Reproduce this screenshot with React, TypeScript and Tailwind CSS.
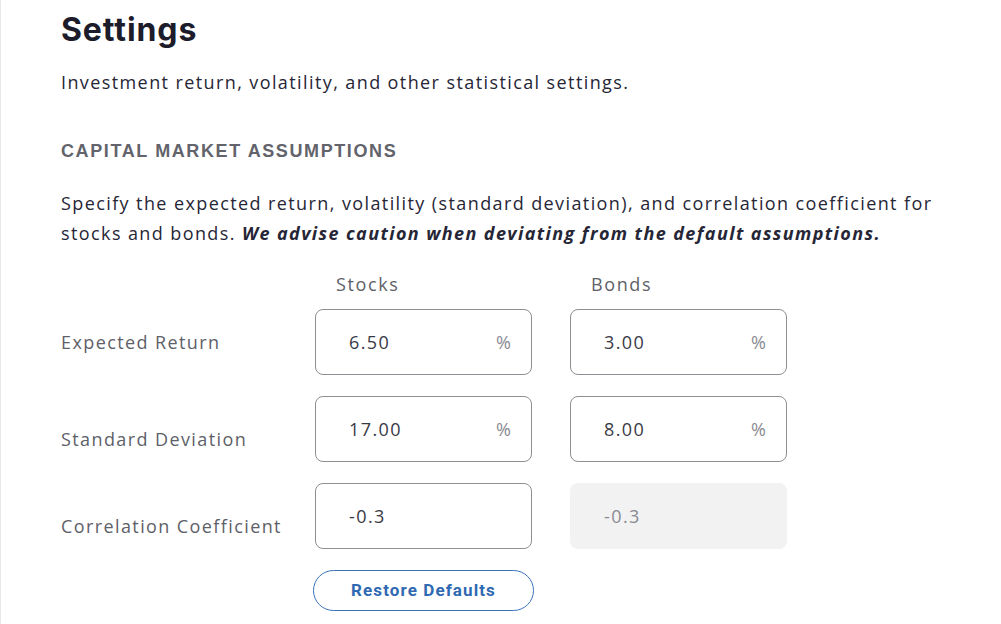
import React from "react";

const body = { fontFamily: '"Open Sans", "Noto Sans", sans-serif' };

function Box({ value, pct, disabled }: { value: string; pct?: boolean; disabled?: boolean }) {
  return (
    <div
      className={
        disabled
          ? "flex h-[66px] w-[217px] items-center justify-between rounded-[8px] bg-[#f2f2f2] pl-[34px] pr-[21px] text-[18px] tracking-[1.4px] text-[#8a8a92]"
          : "flex h-[66px] w-[217px] items-center justify-between rounded-[8px] border border-[#8e8e94] bg-white pl-[33px] pr-[20px] text-[18px] tracking-[1.4px] text-[#3a3a46]"
      }
    >
      <span>{value}</span>
      {pct && <span className="tracking-normal text-[#8a8a92]">%</span>}
    </div>
  );
}

function Row({ label, offset, children }: { label: string; offset?: boolean; children: React.ReactNode }) {
  return (
    <div className="flex items-center">
      <div className={"w-[254px] text-[18px] tracking-[1.4px] text-[#5e5f68] " + (offset ? "pt-[20px]" : "")}>
        {label}
      </div>
      <div className="flex gap-[38px]">{children}</div>
    </div>
  );
}

export default function App() {
  return (
    <div className="min-h-screen border-l border-[#e8e8e8] bg-white pl-[60px] pt-[11px]" style={body}>
      <h1
        className="text-[32px] font-bold leading-[38px] tracking-[0.9px] text-[#1c1c2b]"
        style={{ fontFamily: '"Inter", "Noto Sans", sans-serif' }}
      >
        Settings
      </h1>
      <p className="mt-[19px] text-[18px] leading-[28px] tracking-[1.4px] text-[#262636]">
        Investment return, volatility, and other statistical settings.
      </p>
      <h2
        className="mt-[43px] text-[18px] font-bold leading-[24px] tracking-[1.6px] text-[#63636b]"
        style={{ fontFamily: '"Liberation Sans", Arial, sans-serif' }}
      >
        CAPITAL MARKET ASSUMPTIONS
      </h2>
      <p className="mt-[25px] w-[900px] text-[18px] leading-[30px] tracking-[1.4px] text-[#262636]">
        Specify the expected return, volatility (standard deviation), and correlation coefficient for stocks and bonds.{" "}
        <b className="italic">We advise caution when deviating from the default assumptions.</b>
      </p>
      <div className="mt-[22px] flex flex-col">
        <div className="flex h-[28px] items-center text-[18px] tracking-[1.6px] text-[#5e5f68]">
          <div className="w-[254px]" />
          <div className="w-[255px] pl-[21px]">Stocks</div>
          <div className="pl-[21px]">Bonds</div>
        </div>
        <div className="mt-[11px] flex flex-col gap-[21px]">
          <Row label="Expected Return">
            <Box value="6.50" pct />
            <Box value="3.00" pct />
          </Row>
          <Row label="Standard Deviation" offset>
            <Box value="17.00" pct />
            <Box value="8.00" pct />
          </Row>
          <Row label="Correlation Coefficient" offset>
            <Box value="-0.3" />
            <Box value="-0.3" disabled />
          </Row>
          <div className="flex">
            <div className="w-[252px]" />
            <button
              className="flex h-[41px] w-[221px] items-center justify-center rounded-full border border-[#3a72b8] bg-white text-[17px] font-bold tracking-[1.1px] text-[#2f69b2]"
              style={{ fontFamily: '"Roboto", "Liberation Sans", sans-serif' }}
            >
              Restore Defaults
            </button>
          </div>
        </div>
      </div>
    </div>
  );
}
